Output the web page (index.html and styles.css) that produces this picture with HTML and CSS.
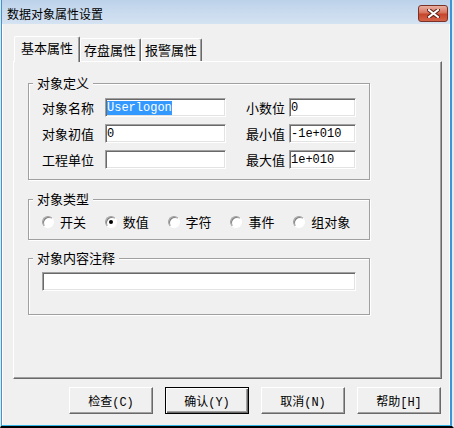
FILE: index.html
```html
<!DOCTYPE html>
<html lang="zh-CN">
<head>
<meta charset="UTF-8">
<title>数据对象属性设置</title>
<link rel="stylesheet" href="styles.css">
</head>
<body>
<div class="frame">
  <div class="window">
    <div class="titlebar">
      <span class="title">数据对象属性设置</span>
      <button class="close-btn">
        <svg width="13" height="9" viewBox="0 0 13 9">
          <path d="M2 1 L11 8 M11 1 L2 8" stroke="#5a1f16" stroke-width="4" stroke-linecap="square"/>
          <path d="M2 1 L11 8 M11 1 L2 8" stroke="#fff" stroke-width="2" stroke-linecap="square"/>
        </svg>
      </button>
    </div>
    <div class="client">
      <div class="tabs">
        <div class="tab active">基本属性</div>
        <div class="tab">存盘属性</div>
        <div class="tab">报警属性</div>
      </div>
      <div class="tab-page">
        <div class="group">
          <div class="group-title">对象定义</div>
          <div class="fields">
            <div class="row">
              <span class="label">对象名称</span>
              <div class="field wide"><span class="sel">Userlogon</span></div>
              <span class="label small">小数位</span>
              <div class="field narrow">0</div>
            </div>
            <div class="row">
              <span class="label">对象初值</span>
              <div class="field wide">0</div>
              <span class="label small">最小值</span>
              <div class="field narrow">-1e+010</div>
            </div>
            <div class="row">
              <span class="label">工程单位</span>
              <div class="field wide"></div>
              <span class="label small">最大值</span>
              <div class="field narrow">1e+010</div>
            </div>
          </div>
        </div>
        <div class="group">
          <div class="group-title">对象类型</div>
          <div class="radios">
            <label class="radio-item"><span class="radio"></span>开关</label>
            <label class="radio-item"><span class="radio checked"></span>数值</label>
            <label class="radio-item"><span class="radio"></span>字符</label>
            <label class="radio-item"><span class="radio"></span>事件</label>
            <label class="radio-item"><span class="radio"></span>组对象</label>
          </div>
        </div>
        <div class="group group-note">
          <div class="group-title">对象内容注释</div>
          <div class="field note"></div>
        </div>
      </div>
      <div class="buttons">
        <button class="btn">检查(C)</button>
        <button class="btn default">确认(Y)</button>
        <button class="btn">取消(N)</button>
        <button class="btn">帮助[H]</button>
      </div>
    </div>
  </div>
</div>
</body>
</html>
```

FILE: styles.css
```css
body {
    margin: 0;
    font-family: "Noto Sans CJK SC", sans-serif;
    font-size: 13px;
    color: #000;
    background: #fff;
}
.frame {
    width: 454px;
    height: 428px;
    box-sizing: border-box;
    border-left: 1px solid #dbe3eb;
    border-right: 2px solid #e4eaf0;
    border-bottom: 2px solid #000;
    display: flex;
    flex-direction: column;
}
.window {
    flex: 1;
    display: flex;
    flex-direction: column;
    background-color: #f0f0f0;
    border-left: 1px solid #3c95d4;
    border-right: 2px solid #3c95d4;
    border-bottom: 1px solid #33b6e6;
}
.titlebar {
    height: 24px;
    display: flex;
    align-items: flex-start;
    background: linear-gradient(#bcd2ea, #d5e3f2);
}
.title {
    font-size: 12px;
    line-height: 14px;
    margin: 7px 0 0 5px;
}
.close-btn {
    margin: 5px 2px 0 auto;
    width: 30px;
    height: 17px;
    padding: 0;
    display: flex;
    align-items: center;
    justify-content: center;
    border: 1px solid #7a3227;
    border-radius: 3px;
    background: linear-gradient(#eab1a3, #d8735d 45%, #c7452b 55%, #d4644a);
}
.client {
    flex: 1;
    border-left: 1px solid #fff;
    border-right: 1px solid #fff;
    padding: 12px 7px 0 10px;
}
.tabs {
    height: 25px;
    display: flex;
    align-items: flex-end;
    padding-left: 1px;
}
.tab {
    height: 23px;
    box-sizing: border-box;
    line-height: 22px;
    padding: 0 4px 0 3px;
    border-top: 1px solid #fff;
    border-left: 1px solid #fff;
    border-right: 1px solid #696969;
    box-shadow: inset -1px 0 0 #a0a0a0;
    border-radius: 2px 2px 0 0;
}
.tab.active {
    height: 26px;
    margin-bottom: -1px;
    padding: 0 6px 0 6px;
    position: relative;
    z-index: 1;
    background-color: #f0f0f0;
}
.tab-page {
    height: 318px;
    box-sizing: border-box;
    padding: 21px 0 0 14px;
    border-top: 1px solid #fff;
    border-left: 1px solid #fff;
    border-right: 1px solid #696969;
    border-bottom: 1px solid #696969;
    box-shadow: inset -1px -1px 0 #a0a0a0;
}
.group {
    width: 342px;
    box-sizing: border-box;
    padding: 0 13px 10px;
    border: 1px solid #a0a0a0;
    box-shadow: inset 1px 1px 0 #fff, 1px 1px 0 #fff;
    line-height: 14px;
    margin-bottom: 18px;
}
.group + .group {
    margin-top: 0;
}
.group:first-child {
    margin-bottom: 19px;
}
.group-title {
    display: table;
    margin: -8px 0 0 -9px;
    padding: 0 4px;
    background-color: #f0f0f0;
}
.fields {
    margin-top: 8px;
    display: flex;
    flex-direction: column;
    gap: 7px;
}
.row {
    display: flex;
    align-items: center;
}
.label {
    width: 63px;
}
.label.small {
    width: 43px;
    margin-left: 20px;
}
.field {
    height: 19px;
    box-sizing: border-box;
    display: flex;
    align-items: center;
    padding-left: 1px;
    background-color: #fff;
    border: 1px solid;
    border-color: #a0a0a0 #fff #fff #a0a0a0;
    box-shadow: inset 1px 1px 0 #696969, inset -1px -1px 0 #e3e3e3;
    font-family: "Liberation Mono", monospace;
    font-size: 12px;
}
.field.wide {
    width: 121px;
}
.field.narrow {
    width: 67px;
}
.sel {
    line-height: 14px;
    background-color: #3399ff;
    color: #fff;
}
.radios {
    margin-top: 9px;
    display: flex;
}
.radio-item {
    width: 63.3px;
    display: flex;
    align-items: center;
}
.radio {
    width: 12px;
    height: 12px;
    box-sizing: border-box;
    margin-right: 6px;
    border-radius: 50%;
    background-color: #fff;
    border: 1px solid;
    border-color: #a0a0a0 #fff #fff #a0a0a0;
    box-shadow: inset 1px 1px 0 #808080;
    display: flex;
    align-items: center;
    justify-content: center;
}
.radio.checked::after {
    content: "";
    width: 4px;
    height: 4px;
    border-radius: 50%;
    background-color: #000;
}
.group-note {
    padding-bottom: 23px;
}
.field.note {
    width: 314px;
    margin-top: 7px;
}
.buttons {
    margin-top: 8px;
    padding-right: 1px;
    display: flex;
    justify-content: flex-end;
    gap: 12px;
}
.btn {
    width: 84px;
    height: 27px;
    padding: 0;
    font-family: "Liberation Mono", "Noto Sans CJK SC", monospace;
    font-size: 12px;
    color: #000;
    background-color: #f0f0f0;
    border: 1px solid;
    border-color: #fff #696969 #696969 #fff;
    box-shadow: inset -1px -1px 0 #a0a0a0;
}
.btn.default {
    border-color: #000;
    box-shadow: inset 1px 1px 0 #fff, inset -1px -1px 0 #696969, inset -2px -2px 0 #a0a0a0;
}
```
